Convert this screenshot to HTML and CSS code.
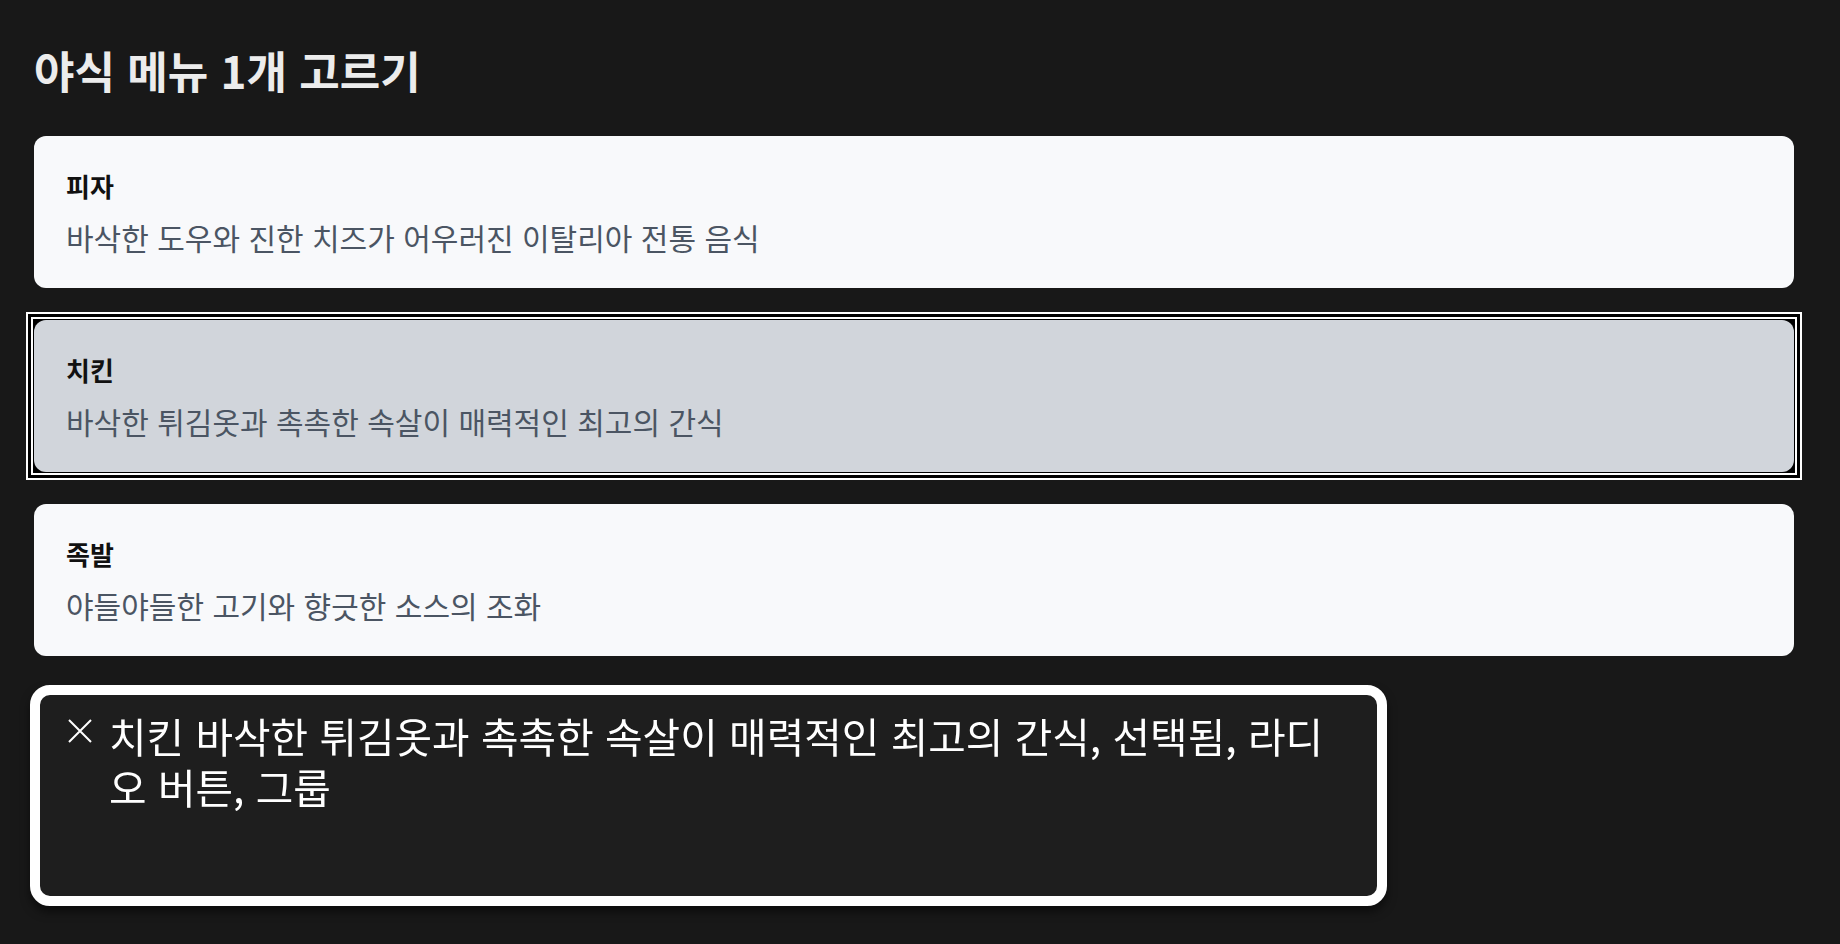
FILE: index.html
```html
<!DOCTYPE html>
<html lang="ko">
<head>
<meta charset="utf-8">
<title>야식 메뉴 1개 고르기</title>
<link rel="stylesheet" href="styles.css">
</head>
<body>
<main class="page">
  <h1 class="title">야식 메뉴 1개 고르기</h1>
  <div class="options" role="radiogroup" aria-label="야식 메뉴 1개 고르기">
    <div class="option" role="radio" aria-checked="false">
      <div class="label">피자</div>
      <div class="desc">바삭한 도우와 진한 치즈가 어우러진 이탈리아 전통 음식</div>
    </div>
    <div class="focus-ring">
      <div class="option selected" role="radio" aria-checked="true">
        <div class="label">치킨</div>
        <div class="desc">바삭한 튀김옷과 촉촉한 속살이 매력적인 최고의 간식</div>
      </div>
    </div>
    <div class="option" role="radio" aria-checked="false">
      <div class="label">족발</div>
      <div class="desc">야들야들한 고기와 향긋한 소스의 조화</div>
    </div>
  </div>
</main>
<div class="caption">
  <svg class="close" viewBox="0 0 26 26" aria-hidden="true"><path d="M2 2 L24 24 M24 2 L2 24" stroke="#fff" stroke-width="2" fill="none"/></svg>
  <p class="caption-text">치킨 바삭한 튀김옷과 촉촉한 속살이 매력적인 최고의 간식, 선택됨, 라디오 버튼, 그룹</p>
</div>
</body>
</html>
```

FILE: styles.css
```css
html, body {
  margin: 0;
  padding: 0;
  background: #181818;
  font-family: "Noto Sans CJK KR", "Noto Sans", sans-serif;
}
.page {
  padding: 40px 46px 40px 34px;
}
.title {
  margin: 0 0 36px 0;
  font-size: 44px;
  line-height: 60px;
  font-weight: 700;
  color: #ececec;
}
.options {
  display: flex;
  flex-direction: column;
  gap: 32px;
}
.option {
  box-sizing: border-box;
  height: 152px;
  padding: 32px 32px 0 32px;
  background: #f8f9fb;
  border-radius: 12px;
}
.option.selected {
  background: #d1d5db;
}
.focus-ring {
  background: #000;
  box-shadow: 0 0 0 1px #000, 0 0 0 3px #fff, 0 0 0 6px #000, 0 0 0 8px #fff;
}
.label {
  font-size: 26px;
  line-height: 36px;
  font-weight: 700;
  color: #111111;
}
.desc {
  margin-top: 13px;
  font-size: 30px;
  line-height: 40px;
  color: #4b5563;
}
.caption {
  position: fixed;
  left: 30px;
  top: 685px;
  width: 1357px;
  height: 221px;
  box-sizing: border-box;
  border: 10px solid #ffffff;
  border-radius: 20px;
  background: #1e1e1e;
  box-shadow: 0 6px 10px rgba(0, 0, 0, 0.5);
  display: flex;
  align-items: flex-start;
  padding: 15px 40px 0 27px;
}
.close {
  flex: none;
  width: 26px;
  height: 26px;
  margin-top: 8px;
  margin-right: 16px;
}
.caption-text {
  margin: 0;
  font-size: 40.8px;
  line-height: 51px;
  color: #ffffff;
}
```
